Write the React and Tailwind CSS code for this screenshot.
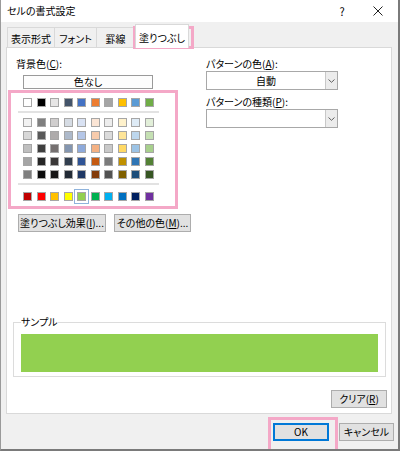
import React from "react";

const top = ["#FFFFFF", "#000000", "#E7E6E6", "#44546A", "#4472C4", "#ED7D31", "#A5A5A5", "#FFC000", "#5B9BD5", "#70AD47"];
const theme = [
  ["#F2F2F2", "#7F7F7F", "#D0CECE", "#D6DCE4", "#D9E2F3", "#FBE5D5", "#EDEDED", "#FFF2CC", "#DEEBF6", "#E2EFD9"],
  ["#D8D8D8", "#595959", "#AEABAB", "#ADB9CA", "#B4C6E7", "#F7CBAC", "#DBDBDB", "#FEE599", "#BDD7EE", "#C5E0B3"],
  ["#BFBFBF", "#3F3F3F", "#757070", "#8496B0", "#8EAADB", "#F4B183", "#C9C9C9", "#FFD965", "#9CC3E5", "#A8D08D"],
  ["#A5A5A5", "#262626", "#3A3838", "#323F4F", "#2F5496", "#C55A11", "#7B7B7B", "#BF9000", "#2E75B5", "#538135"],
  ["#7F7F7F", "#0C0C0C", "#171616", "#222A35", "#1F3864", "#833C0B", "#525252", "#7F6000", "#1E4E79", "#375623"],
];
const standard = ["#C00000", "#FF0000", "#FFC000", "#FFFF00", "#92D050", "#00B050", "#00B0F0", "#0070C0", "#002060", "#7030A0"];

function Swatch({ color, selected }) {
  return (
    <div
      className={
        "w-[9px] h-[9px] border border-[#a6a6a6] " +
        (selected ? "outline outline-1 outline-[#8fb3dc] outline-offset-[2px]" : "")
      }
      style={{ backgroundColor: color }}
    />
  );
}

function Row({ colors, selectedIndex }) {
  return (
    <div className="flex justify-between px-[5px]">
      {colors.map((c, i) => (
        <Swatch key={i} color={c} selected={i === selectedIndex} />
      ))}
    </div>
  );
}

function Btn({ children, className = "" }) {
  return (
    <div
      className={
        "h-[18px] flex items-center justify-center bg-[#e1e1e1] border border-[#adadad] text-[10px] leading-[12px] text-black " +
        className
      }
    >
      {children}
    </div>
  );
}

function Select({ value }) {
  return (
    <div className="h-[19px] w-[132px] flex bg-white border border-[#a8a8a8]">
      <div className="flex-1 flex items-center justify-center text-[10px] leading-[12px]">{value}</div>
      <div className="w-[12px] border-l border-[#c8c8c8] bg-[#ececec] flex items-center justify-center">
        <svg width="7" height="4" viewBox="0 0 7 4">
          <path d="M0.5 0.5 L3.5 3.3 L6.5 0.5" fill="none" stroke="#606060" strokeWidth="1" />
        </svg>
      </div>
    </div>
  );
}

export default function App() {
  return (
    <div className="relative w-[400px] h-[451px] bg-[#f0f0f0] border-l border-l-[#9a9a9a] border-r-2 border-r-[#7a7a7a] border-b-2 border-b-[#7a7a7a] flex flex-col font-['Noto_Sans_CJK_JP','Noto_Sans',sans-serif] [font-feature-settings:'palt'] text-black overflow-hidden">
      {/* title bar */}
      <div className="h-[22px] bg-white flex items-center pl-[6px] shrink-0">
        <span className="text-[10px] leading-[12px]">セルの書式設定</span>
        <div className="flex-1" />
        <span className="text-[11px] leading-[12px] w-[10px] text-center mr-[26px]">?</span>
        <svg width="10" height="10" viewBox="0 0 10 10" className="mr-[15px]">
          <path d="M0.5 0.5 L9.5 9.5 M9.5 0.5 L0.5 9.5" stroke="#222" strokeWidth="1" />
        </svg>
      </div>

      {/* tabs */}
      <div className="h-[25px] flex items-end pl-[6px] shrink-0">
        <div className="h-[20px] w-[48px] border border-b-0 border-[#d9d9d9] flex items-center justify-center text-[10px] leading-[12px] pt-[2px]">
          表示形式
        </div>
        <div className="h-[20px] w-[42px] border border-b-0 border-l-0 border-[#d9d9d9] flex items-center justify-center text-[10px] leading-[12px] pt-[2px]">
          フォント
        </div>
        <div className="h-[20px] w-[38px] border border-b-0 border-l-0 border-[#d9d9d9] flex items-center justify-center text-[10px] leading-[12px] pt-[2px]">
          罫線
        </div>
        <div className="relative z-10 -mb-[1px] h-[24px] w-[54px] bg-white border border-b-0 border-[#d9d9d9] flex items-center justify-center text-[10px] leading-[12px] pt-[3px]">
          塗りつぶし
        </div>
      </div>

      {/* panel */}
      <div className="ml-[5px] mr-[6px] h-[367px] bg-white border border-[#d9d9d9] flex flex-col shrink-0">
        <div className="flex">
          {/* left column */}
          <div className="w-[193px] pl-[9px] pt-[10px] flex flex-col">
            <div className="text-[10px] leading-[12px]">
              背景色(<u>C</u>):
            </div>
            <div className="mt-[5px] ml-[7px] w-[130px] h-[14px] border border-[#9a9a9a] bg-[#fdfdfd] flex items-center justify-center text-[10px] leading-[12px]">
              色なし
            </div>
            <div className="mt-[9px] ml-[2px] w-[141px] flex flex-col">
              <Row colors={top} />
              <div className="mt-[4px] h-[2px] bg-[#e2e2e2]" />
              <div className="mt-[5px] flex flex-col gap-[4px]">
                {theme.map((r, i) => (
                  <Row key={i} colors={r} />
                ))}
              </div>
              <div className="mt-[4px] h-[2px] bg-[#e2e2e2]" />
              <div className="mt-[7px]">
                <Row colors={standard} selectedIndex={4} />
              </div>
            </div>
            <div className="mt-[13px] ml-[2px] flex gap-[8px]">
              <Btn className="w-[88px]">
                塗りつぶし効果(<u>I</u>)...
              </Btn>
              <Btn className="w-[77px]">
                その他の色(<u>M</u>)...
              </Btn>
            </div>
          </div>
          {/* right column */}
          <div className="pl-[6px] pt-[10px] flex flex-col">
            <div className="text-[10px] leading-[12px]">
              パターンの色(<u>A</u>):
            </div>
            <div className="mt-[1px]">
              <Select value="自動" />
            </div>
            <div className="mt-[6px] text-[10px] leading-[12px]">
              パターンの種類(<u>P</u>):
            </div>
            <div className="mt-[1px]">
              <Select value="" />
            </div>
          </div>
        </div>

        {/* sample */}
        <fieldset className="mt-[84px] ml-[6px] mr-[5px] border border-[#dcdcdc] px-[7px] pt-[6px] pb-[4px] min-w-0">
          <legend className="text-[10px] leading-[12px] px-0 ml-[0px]">サンプル</legend>
          <div className="h-[38px] bg-[#92d050]" />
        </fieldset>

        <div className="mt-[13px] flex justify-end pr-[4px]">
          <Btn className="w-[56px] h-[17px]">
            クリア(<u>R</u>)
          </Btn>
        </div>
      </div>

      {/* bottom buttons */}
      <div className="mt-[9px] flex justify-end pr-[4px] gap-[10px]">
        <div className="w-[56px] h-[18px] flex items-center justify-center bg-[#e1e1e1] border-2 border-[#0078d7] text-[10px] leading-[12px]">
          OK
        </div>
        <Btn className="w-[55px]">キャンセル</Btn>
      </div>

      {/* highlight annotations */}
      <div className="absolute left-[132px] top-[26px] w-[61px] h-[23px] border-[3px] border-[#f4a8c7] pointer-events-none" />
      <div className="absolute left-[7px] top-[90px] w-[170px] h-[119px] border-[3px] border-[#f4a8c7] pointer-events-none" />
      <div className="absolute left-[267px] top-[417px] w-[70px] h-[36px] border-[3px] border-[#f4a8c7] pointer-events-none" />
    </div>
  );
}
